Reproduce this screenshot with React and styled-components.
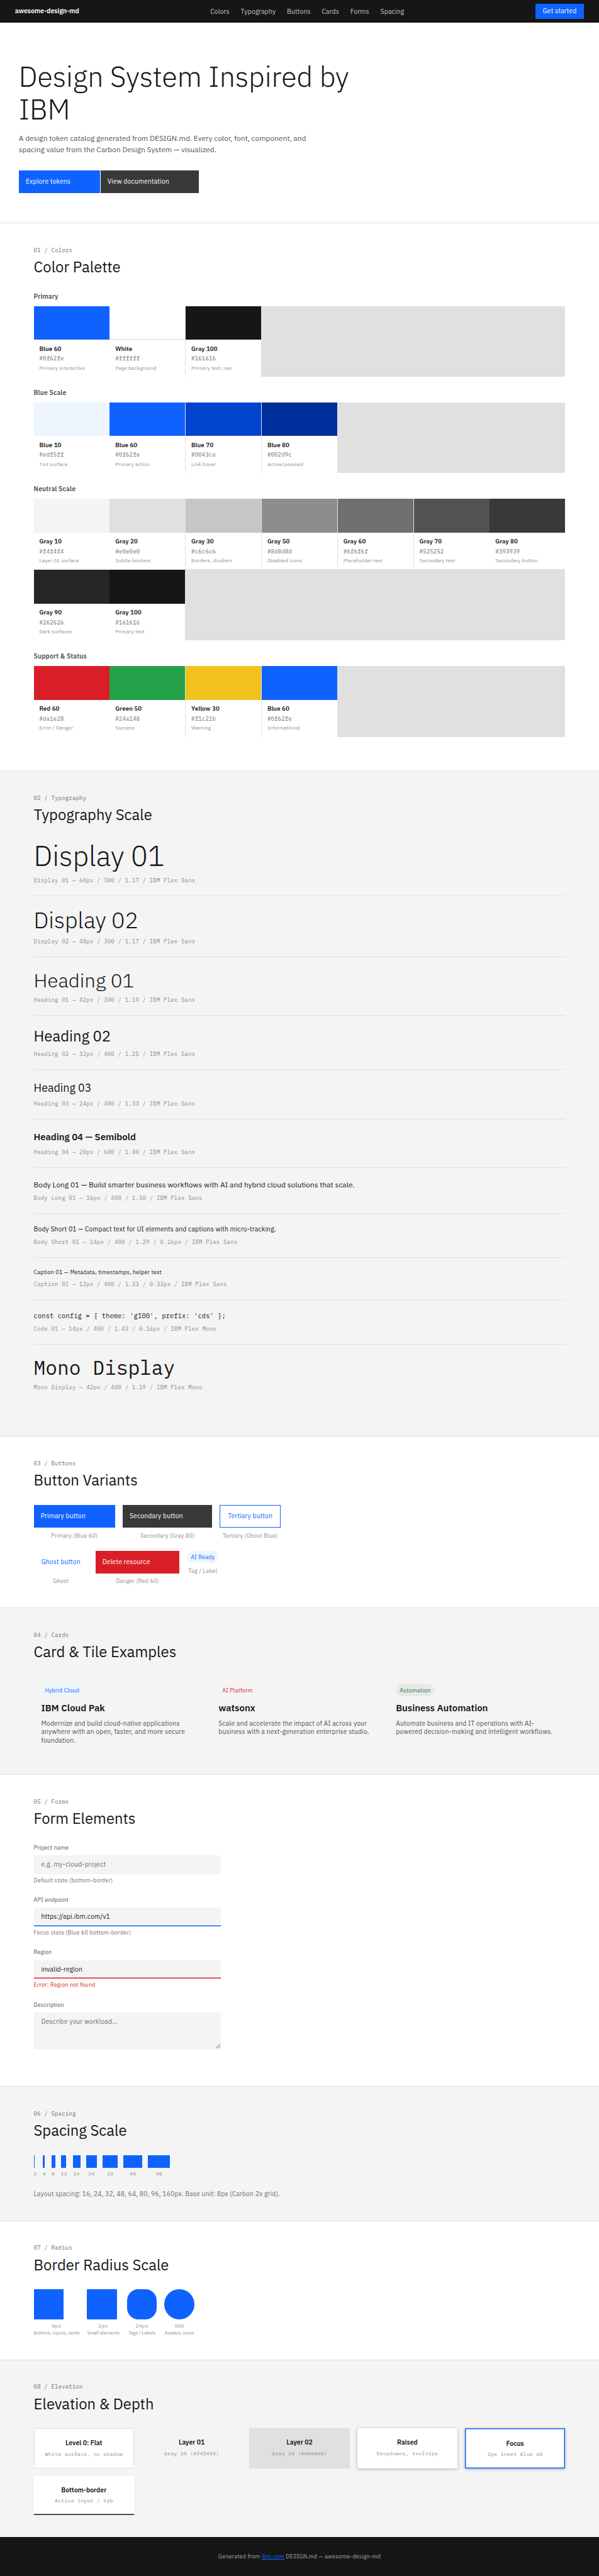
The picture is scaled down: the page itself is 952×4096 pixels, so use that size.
import React from 'react';
import styled, { createGlobalStyle } from 'styled-components';

const sans = '"IBM Plex Sans", Roboto, "Liberation Sans", sans-serif';
const mono = '"IBM Plex Mono", "Liberation Mono", monospace';

const GlobalStyle = createGlobalStyle`
  * {
    box-sizing: border-box;
  }

  body {
    margin: 0;
    background: #ffffff;
  }
`;

/* The catalog is laid out on a 1280px wide canvas */
const Page = styled.div`
  width: 1280px;
  zoom: 0.74375;
  font-family: ${sans};
  font-size: 16px;
  line-height: 1.5;
  color: #161616;
  background: #ffffff;
`;

const Nav = styled.nav`
  display: flex;
  justify-content: space-between;
  align-items: center;
  height: 48px;
  padding: 0 32px;
  background: #161616;
`;

const Brand = styled.span`
  font-size: 14px;
  font-weight: 600;
  line-height: 18px;
  color: #ffffff;
`;

const NavLinks = styled.div`
  display: flex;
  gap: 24px;
  padding-top: 2px;
`;

const NavLink = styled.a`
  font-size: 14px;
  line-height: 18px;
  letter-spacing: 0.16px;
  color: #c6c6c6;
  text-decoration: none;
`;

const NavButton = styled.button`
  height: 32px;
  padding: 0 16px;
  border: none;
  font-family: inherit;
  font-size: 14px;
  line-height: 18px;
  letter-spacing: 0.16px;
  color: #ffffff;
  background: #0f62fe;
`;

const Hero = styled.header`
  padding: 80px 40px 63.7px;
  border-bottom: 1px solid #e0e0e0;
`;

const HeroTitle = styled.h1`
  max-width: 800px;
  margin: 0 0 16px;
  font-size: 60px;
  font-weight: 300;
  line-height: 1.17;
`;

const HeroText = styled.p`
  max-width: 640px;
  margin: 0 0 32px;
  font-size: 16px;
  line-height: 24px;
  color: #525252;
`;

const HeroButtons = styled.div`
  display: flex;
  gap: 1px;
`;

const Section = styled.section`
  padding: 48px 72px ${(props) => (props.last ? 48 : 47.7)}px;
  border-bottom: ${(props) => (props.last ? 'none' : '1px solid #e0e0e0')};
  background: ${(props) => (props.gray ? '#f4f4f4' : '#ffffff')};
`;

const SectionLabel = styled.div`
  margin-bottom: 8px;
  font-family: ${mono};
  font-size: 12px;
  line-height: 18px;
  letter-spacing: 0.32px;
  color: #6f6f6f;
`;

const SectionTitle = styled.h2`
  margin: 0 0 32px;
  font-size: 32px;
  font-weight: 400;
  line-height: 40px;
`;

/* Colors */

const GroupTitle = styled.h3`
  margin: 0 0 12px;
  font-size: 14px;
  font-weight: 600;
  line-height: 19px;
  letter-spacing: 0.16px;
  color: #525252;
`;

const Swatches = styled.div`
  display: grid;
  grid-template-columns: repeat(7, 1fr);
  gap: 1px;
  margin-bottom: 24px;
  background: #e0e0e0;
`;

const Swatch = styled.div`
  height: 151px;
  background: #ffffff;
`;

const SwatchColor = styled.div`
  height: 72px;
  background: ${(props) => props.color};
  border-bottom: ${(props) => (props.color === '#ffffff' ? '1px solid #e0e0e0' : 'none')};
`;

const SwatchInfo = styled.div`
  display: flex;
  flex-direction: column;
  gap: 3px;
  padding: 10px 12px;
`;

const SwatchName = styled.div`
  font-size: 13px;
  font-weight: 600;
  line-height: 18px;
  letter-spacing: 0.16px;
`;

const SwatchHex = styled.div`
  font-family: ${mono};
  font-size: 12px;
  line-height: 18px;
  letter-spacing: 0.32px;
  color: #6f6f6f;
`;

const SwatchUse = styled.div`
  font-size: 11px;
  line-height: 16.5px;
  letter-spacing: 0.2px;
  color: #8d8d8d;
`;

/* Typography */

const TypeRow = styled.div`
  padding: 24px 0 23.7px;
  border-bottom: 1px solid #e0e0e0;

  &:first-of-type {
    padding-top: 0;
  }

  &:last-child {
    padding-bottom: 48px;
    border-bottom: none;
  }
`;

const TypeSample = styled.div`
  margin-bottom: 8px;
  font-family: ${(props) => (props.mono ? mono : sans)};
  font-size: ${(props) => props.size}px;
  font-weight: ${(props) => props.weight};
  line-height: ${(props) => props.height};
  letter-spacing: ${(props) => props.spacing || 0}px;
`;

const TypeMeta = styled.div`
  font-family: ${mono};
  font-size: 12px;
  line-height: 18px;
  letter-spacing: 0.32px;
  color: #8d8d8d;
`;

/* Buttons */

const buttonKinds = {
  primary: 'color: #ffffff; background: #0f62fe; padding: 0 63px 0 15px;',
  secondary: 'color: #ffffff; background: #393939; padding: 0 63px 0 15px;',
  danger: 'color: #ffffff; background: #da1e28; padding: 0 63px 0 15px;',
  tertiary: 'color: #0f62fe; background: transparent; border: 1px solid #0f62fe;',
  ghost: 'color: #0f62fe; background: transparent;',
};

const Button = styled.button`
  height: 48px;
  padding: 0 16px;
  border: none;
  font-family: inherit;
  font-size: 14px;
  line-height: 18px;
  letter-spacing: 0.16px;
  white-space: nowrap;
  ${(props) => buttonKinds[props.kind]}
`;

const ButtonRows = styled.div`
  display: flex;
  flex-direction: column;
  gap: 24px;
`;

const ButtonRow = styled.div`
  display: flex;
  align-items: flex-start;
  gap: 16px;
`;

const ButtonItem = styled.div`
  display: flex;
  flex-direction: column;
  align-items: center;
  gap: 8px;
`;

const ButtonCaption = styled.span`
  font-size: 12px;
  line-height: 18px;
  letter-spacing: 0.32px;
  color: #8d8d8d;
`;

const Tag = styled.span`
  display: inline-block;
  padding: 4px 8px;
  border-radius: 24px;
  font-size: 12px;
  line-height: 18px;
  letter-spacing: 0.32px;
  color: ${(props) => props.color};
  background: ${(props) => props.bg};
`;

/* Cards */

const Cards = styled.div`
  display: grid;
  grid-template-columns: repeat(3, 1fr);
  gap: 1px;
  background: #e0e0e0;
`;

const Card = styled.div`
  display: flex;
  flex-direction: column;
  align-items: flex-start;
  height: 161px;
  padding: 16px;
  background: #f4f4f4;
`;

const CardTitle = styled.h3`
  margin: 12.6px 0 8.8px;
  font-size: 20px;
  font-weight: 600;
  line-height: 28px;
`;

const CardText = styled.p`
  margin: 0;
  font-size: 14px;
  line-height: 18.06px;
  letter-spacing: 0.16px;
  color: #525252;
`;

/* Forms */

const Form = styled.div`
  width: 400px;
  padding-bottom: 5.9px;
`;

const Field = styled.div`
  display: flex;
  flex-direction: column;
  margin-bottom: 24px;
`;

const FieldLabel = styled.label`
  margin-bottom: 8px;
  font-size: 12px;
  line-height: 18px;
  letter-spacing: 0.32px;
  color: #525252;
`;

const Input = styled.input`
  height: 40px;
  padding: 0 16px 2px;
  border: none;
  border-radius: 0;
  box-shadow: inset 0 -2px ${(props) => props.line || 'transparent'};
  font-family: inherit;
  font-size: 14px;
  letter-spacing: 0.16px;
  color: #161616;
  background: #f4f4f4;
  outline: none;

  &::placeholder {
    color: #6f6f6f;
  }
`;

const TextArea = styled.textarea`
  height: 80px;
  padding: 11px 16px;
  border: none;
  border-bottom: 2px solid transparent;
  font-family: inherit;
  font-size: 14px;
  line-height: 18px;
  letter-spacing: 0.16px;
  background: #f4f4f4;
  resize: vertical;

  &::placeholder {
    color: #6f6f6f;
  }
`;

const Helper = styled.div`
  margin-top: 4px;
  font-size: 12px;
  line-height: 18px;
  letter-spacing: 0.32px;
  color: ${(props) => (props.error ? '#da1e28' : '#6f6f6f')};
`;

/* Spacing */

const SpacingRow = styled.div`
  display: flex;
  gap: 12px;
  margin-bottom: 24px;
`;

const SpacingBar = styled.div`
  width: ${(props) => props.size}px;
  height: 28px;
  background: #0f62fe;
`;

const SpacingValue = styled.div`
  margin-top: 4px;
  font-family: ${mono};
  font-size: 11px;
  line-height: 18.2px;
  letter-spacing: 0.32px;
  text-align: center;
  color: #8d8d8d;
`;

const Note = styled.p`
  margin: 0;
  font-size: 14px;
  line-height: 18px;
  letter-spacing: 0.16px;
  color: #6f6f6f;
`;

/* Radius */

const RadiusRow = styled.div`
  display: flex;
  gap: 16px;
`;

const RadiusItem = styled.div`
  text-align: center;
`;

const RadiusShape = styled.div`
  width: 64px;
  height: 64px;
  border-radius: ${(props) => props.radius};
  background: #0f62fe;
`;

const RadiusValue = styled.div`
  margin-top: 6px;
  font-family: ${mono};
  font-size: 11px;
  line-height: 16.5px;
  letter-spacing: 0.32px;
  color: #8d8d8d;
`;

const RadiusUse = styled.div`
  font-size: 10px;
  line-height: 15.7px;
  color: #8d8d8d;
`;

/* Elevation */

const Elevations = styled.div`
  display: grid;
  grid-template-columns: repeat(5, 1fr);
  gap: 16px;
`;

const elevationStyles = {
  flat: 'background: #ffffff; border: 1px solid #e0e0e0;',
  layer1: 'background: #f4f4f4;',
  layer2: 'background: #e0e0e0;',
  raised: 'background: #ffffff; box-shadow: 0 2px 6px rgba(0, 0, 0, 0.3);',
  focus: `
    padding: 22px 18px;
    background: #ffffff;
    box-shadow: inset 0 0 0 2px #0f62fe, 0 2px 6px rgba(0, 0, 0, 0.3);
  `,
  bottom: 'padding-bottom: 22px; background: #ffffff; box-shadow: inset 0 -2px #161616;',
};

const Elevation = styled.div`
  padding: 20px 16px;
  text-align: center;
  ${(props) => elevationStyles[props.level]}
`;

const ElevationName = styled.div`
  margin-bottom: 4px;
  font-size: 14px;
  font-weight: 600;
  line-height: 21px;
`;

const ElevationUse = styled.div`
  font-family: ${mono};
  font-size: 11px;
  line-height: 16.5px;
  letter-spacing: 0.32px;
  white-space: nowrap;
  color: #8d8d8d;
`;

const Footer = styled.footer`
  padding: 32px;
  font-size: 12px;
  line-height: 18.2px;
  letter-spacing: 0.32px;
  text-align: center;
  color: #a8a8a8;
  background: #161616;
`;

const FooterLink = styled.a`
  color: #0f62fe;
  text-decoration: underline;
`;

const navItems = ['Colors', 'Typography', 'Buttons', 'Cards', 'Forms', 'Spacing'];

const palette = [
  {
    title: 'Primary',
    colors: [
      ['Blue 60', '#0f62fe', 'Primary interactive'],
      ['White', '#ffffff', 'Page background'],
      ['Gray 100', '#161616', 'Primary text, nav'],
    ],
  },
  {
    title: 'Blue Scale',
    colors: [
      ['Blue 10', '#edf5ff', 'Tint surface'],
      ['Blue 60', '#0f62fe', 'Primary action'],
      ['Blue 70', '#0043ce', 'Link hover'],
      ['Blue 80', '#002d9c', 'Active/pressed'],
    ],
  },
  {
    title: 'Neutral Scale',
    colors: [
      ['Gray 10', '#f4f4f4', 'Layer 01 surface'],
      ['Gray 20', '#e0e0e0', 'Subtle borders'],
      ['Gray 30', '#c6c6c6', 'Borders, dividers'],
      ['Gray 50', '#8d8d8d', 'Disabled icons'],
      ['Gray 60', '#6f6f6f', 'Placeholder text'],
      ['Gray 70', '#525252', 'Secondary text'],
      ['Gray 80', '#393939', 'Secondary button'],
      ['Gray 90', '#262626', 'Dark surfaces'],
      ['Gray 100', '#161616', 'Primary text'],
    ],
  },
  {
    title: 'Support & Status',
    colors: [
      ['Red 60', '#da1e28', 'Error / Danger'],
      ['Green 50', '#24a148', 'Success'],
      ['Yellow 30', '#f1c21b', 'Warning'],
      ['Blue 60', '#0f62fe', 'Informational'],
    ],
  },
];

const typeScale = [
  { text: 'Display 01', size: 60, weight: 300, height: 1.17, meta: 'Display 01 — 60px / 300 / 1.17 / IBM Plex Sans' },
  { text: 'Display 02', size: 48, weight: 300, height: 1.17, meta: 'Display 02 — 48px / 300 / 1.17 / IBM Plex Sans' },
  { text: 'Heading 01', size: 42, weight: 300, height: 1.19, meta: 'Heading 01 — 42px / 300 / 1.19 / IBM Plex Sans' },
  { text: 'Heading 02', size: 32, weight: 400, height: 1.25, meta: 'Heading 02 — 32px / 400 / 1.25 / IBM Plex Sans' },
  { text: 'Heading 03', size: 24, weight: 400, height: 1.33, meta: 'Heading 03 — 24px / 400 / 1.33 / IBM Plex Sans' },
  { text: 'Heading 04 — Semibold', size: 20, weight: 600, height: 1.4, meta: 'Heading 04 — 20px / 600 / 1.40 / IBM Plex Sans' },
  {
    text: 'Body Long 01 — Build smarter business workflows with AI and hybrid cloud solutions that scale.',
    size: 16,
    weight: 400,
    height: 1.5,
    meta: 'Body Long 01 — 16px / 400 / 1.50 / IBM Plex Sans',
  },
  {
    text: 'Body Short 01 — Compact text for UI elements and captions with micro-tracking.',
    size: 14,
    weight: 400,
    height: 1.29,
    spacing: 0.16,
    meta: 'Body Short 01 — 14px / 400 / 1.29 / 0.16px / IBM Plex Sans',
  },
  {
    text: 'Caption 01 — Metadata, timestamps, helper text',
    size: 12,
    weight: 400,
    height: 1.33,
    spacing: 0.32,
    meta: 'Caption 01 — 12px / 400 / 1.33 / 0.32px / IBM Plex Sans',
  },
  {
    text: "const config = { theme: 'g100', prefix: 'cds' };",
    size: 14,
    weight: 400,
    height: 1.43,
    spacing: 0.16,
    mono: true,
    meta: 'Code 01 — 14px / 400 / 1.43 / 0.16px / IBM Plex Mono',
  },
  { text: 'Mono Display', size: 42, weight: 400, height: 1.19, mono: true, meta: 'Mono Display — 42px / 400 / 1.19 / IBM Plex Mono' },
];

const cards = [
  {
    tag: 'Hybrid Cloud',
    color: '#0f62fe',
    bg: '#edf5ff',
    title: 'IBM Cloud Pak',
    text: 'Modernize and build cloud-native applications anywhere with an open, faster, and more secure foundation.',
  },
  {
    tag: 'AI Platform',
    color: '#da1e28',
    bg: '#f4f4f4',
    title: 'watsonx',
    text: 'Scale and accelerate the impact of AI across your business with a next-generation enterprise studio.',
  },
  {
    tag: 'Automation',
    color: '#198038',
    bg: '#e6e7e6',
    title: 'Business Automation',
    text: 'Automate business and IT operations with AI-powered decision-making and intelligent workflows.',
  },
];

const spacings = [2, 4, 8, 12, 16, 24, 32, 40, 48];

const radii = [
  ['0px', '0', 'Buttons, inputs, cards'],
  ['2px', '2px', 'Small elements'],
  ['24px', '24px', 'Tags / Labels'],
  ['50%', '50%', 'Avatars, icons'],
];

const elevations = [
  ['flat', 'Level 0: Flat', 'White surface, no shadow'],
  ['layer1', 'Layer 01', 'Gray 10 (#f4f4f4)'],
  ['layer2', 'Layer 02', 'Gray 20 (#e0e0e0)'],
  ['raised', 'Raised', 'Dropdowns, tooltips'],
  ['focus', 'Focus', '2px inset Blue 60'],
  ['bottom', 'Bottom-border', 'Active input / tab'],
];

function App() {
  return (
    <>
      <GlobalStyle />
      <Page>
        <Nav>
          <Brand>awesome-design-md</Brand>
          <NavLinks>
            {navItems.map((item) => (
              <NavLink key={item}>{item}</NavLink>
            ))}
          </NavLinks>
          <NavButton>Get started</NavButton>
        </Nav>

        <Hero>
          <HeroTitle>Design System Inspired by IBM</HeroTitle>
          <HeroText>
            A design token catalog generated from DESIGN.md. Every color, font, component, and spacing value from the
            Carbon Design System — visualized.
          </HeroText>
          <HeroButtons>
            <Button kind="primary">Explore tokens</Button>
            <Button kind="secondary">View documentation</Button>
          </HeroButtons>
        </Hero>

        <Section>
          <SectionLabel>01 / Colors</SectionLabel>
          <SectionTitle>Color Palette</SectionTitle>
          {palette.map((group) => (
            <React.Fragment key={group.title}>
              <GroupTitle>{group.title}</GroupTitle>
              <Swatches>
                {group.colors.map(([name, hex, use]) => (
                  <Swatch key={name}>
                    <SwatchColor color={hex} />
                    <SwatchInfo>
                      <SwatchName>{name}</SwatchName>
                      <SwatchHex>{hex}</SwatchHex>
                      <SwatchUse>{use}</SwatchUse>
                    </SwatchInfo>
                  </Swatch>
                ))}
              </Swatches>
            </React.Fragment>
          ))}
        </Section>

        <Section gray>
          <SectionLabel>02 / Typography</SectionLabel>
          <SectionTitle>Typography Scale</SectionTitle>
          <div>
            {typeScale.map((row) => (
              <TypeRow key={row.text}>
                <TypeSample
                  size={row.size}
                  weight={row.weight}
                  height={row.height}
                  spacing={row.spacing}
                  mono={row.mono}
                >
                  {row.text}
                </TypeSample>
                <TypeMeta>{row.meta}</TypeMeta>
              </TypeRow>
            ))}
          </div>
        </Section>

        <Section>
          <SectionLabel>03 / Buttons</SectionLabel>
          <SectionTitle>Button Variants</SectionTitle>
          <ButtonRows>
            <ButtonRow>
              <ButtonItem>
                <Button kind="primary">Primary button</Button>
                <ButtonCaption>Primary (Blue 60)</ButtonCaption>
              </ButtonItem>
              <ButtonItem>
                <Button kind="secondary">Secondary button</Button>
                <ButtonCaption>Secondary (Gray 80)</ButtonCaption>
              </ButtonItem>
              <ButtonItem>
                <Button kind="tertiary">Tertiary button</Button>
                <ButtonCaption>Tertiary (Ghost Blue)</ButtonCaption>
              </ButtonItem>
            </ButtonRow>
            <ButtonRow>
              <ButtonItem>
                <Button kind="ghost">Ghost button</Button>
                <ButtonCaption>Ghost</ButtonCaption>
              </ButtonItem>
              <ButtonItem>
                <Button kind="danger">Delete resource</Button>
                <ButtonCaption>Danger (Red 60)</ButtonCaption>
              </ButtonItem>
              <ButtonItem>
                <Tag color="#0f62fe" bg="#edf5ff">AI Ready</Tag>
                <ButtonCaption>Tag / Label</ButtonCaption>
              </ButtonItem>
            </ButtonRow>
          </ButtonRows>
        </Section>

        <Section gray>
          <SectionLabel>04 / Cards</SectionLabel>
          <SectionTitle>Card &amp; Tile Examples</SectionTitle>
          <Cards>
            {cards.map((card) => (
              <Card key={card.title}>
                <Tag color={card.color} bg={card.bg}>{card.tag}</Tag>
                <CardTitle>{card.title}</CardTitle>
                <CardText>{card.text}</CardText>
              </Card>
            ))}
          </Cards>
        </Section>

        <Section>
          <SectionLabel>05 / Forms</SectionLabel>
          <SectionTitle>Form Elements</SectionTitle>
          <Form>
            <Field>
              <FieldLabel>Project name</FieldLabel>
              <Input placeholder="e.g. my-cloud-project" />
              <Helper>Default state (bottom-border)</Helper>
            </Field>
            <Field>
              <FieldLabel>API endpoint</FieldLabel>
              <Input line="#0f62fe" defaultValue="https://api.ibm.com/v1" />
              <Helper>Focus state (Blue 60 bottom-border)</Helper>
            </Field>
            <Field>
              <FieldLabel>Region</FieldLabel>
              <Input line="#da1e28" defaultValue="invalid-region" />
              <Helper error>Error: Region not found</Helper>
            </Field>
            <Field>
              <FieldLabel>Description</FieldLabel>
              <TextArea placeholder="Describe your workload..." />
            </Field>
          </Form>
        </Section>

        <Section gray>
          <SectionLabel>06 / Spacing</SectionLabel>
          <SectionTitle>Spacing Scale</SectionTitle>
          <SpacingRow>
            {spacings.map((size) => (
              <div key={size}>
                <SpacingBar size={size} />
                <SpacingValue>{size}</SpacingValue>
              </div>
            ))}
          </SpacingRow>
          <Note>Layout spacing: 16, 24, 32, 48, 64, 80, 96, 160px. Base unit: 8px (Carbon 2x grid).</Note>
        </Section>

        <Section>
          <SectionLabel>07 / Radius</SectionLabel>
          <SectionTitle>Border Radius Scale</SectionTitle>
          <RadiusRow>
            {radii.map(([label, radius, use]) => (
              <RadiusItem key={label}>
                <RadiusShape radius={radius} />
                <RadiusValue>{label}</RadiusValue>
                <RadiusUse>{use}</RadiusUse>
              </RadiusItem>
            ))}
          </RadiusRow>
        </Section>

        <Section gray last>
          <SectionLabel>08 / Elevation</SectionLabel>
          <SectionTitle>Elevation &amp; Depth</SectionTitle>
          <Elevations>
            {elevations.map(([level, name, use]) => (
              <Elevation key={level} level={level}>
                <ElevationName>{name}</ElevationName>
                <ElevationUse>{use}</ElevationUse>
              </Elevation>
            ))}
          </Elevations>
        </Section>

        <Footer>
          Generated from <FooterLink>ibm.com</FooterLink> DESIGN.md — awesome-design-md
        </Footer>
      </Page>
    </>
  );
}

export default App;
